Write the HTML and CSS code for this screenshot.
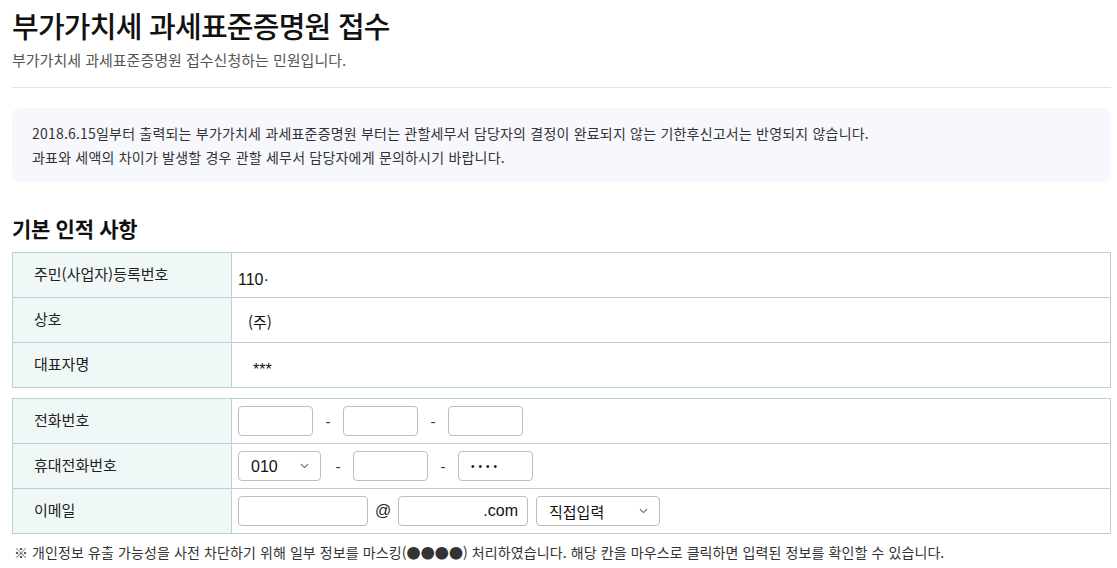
FILE: index.html
```html
<!DOCTYPE html>
<html lang="ko">
<head>
<meta charset="utf-8">
<title>부가가치세 과세표준증명원 접수</title>
<link rel="stylesheet" href="styles.css">
</head>
<body>
<div class="page">
  <header class="head">
    <h1 class="title">부가가치세 과세표준증명원 접수</h1>
    <p class="subtitle">부가가치세 과세표준증명원 접수신청하는 민원입니다.</p>
  </header>
  <hr class="divider">
  <div class="notice">
    <p>2018.6.15일부터 출력되는 부가가치세 과세표준증명원 부터는 관할세무서 담당자의 결정이 완료되지 않는 기한후신고서는 반영되지 않습니다.</p>
    <p>과표와 세액의 차이가 발생할 경우 관할 세무서 담당자에게 문의하시기 바랍니다.</p>
  </div>
  <h2 class="section-title">기본 인적 사항</h2>
  <table class="info">
    <tr>
      <th>주민(사업자)등록번호</th>
      <td><span class="val val-num">110·</span></td>
    </tr>
    <tr>
      <th>상호</th>
      <td><span class="val val-corp">(주)</span></td>
    </tr>
    <tr>
      <th>대표자명</th>
      <td><span class="val val-name">***</span></td>
    </tr>
  </table>
  <table class="info info-form">
    <tr>
      <th>전화번호</th>
      <td>
        <div class="fields">
          <input class="inp inp-s" type="text">
          <span class="sep">-</span>
          <input class="inp inp-s" type="text">
          <span class="sep">-</span>
          <input class="inp inp-s" type="text">
        </div>
      </td>
    </tr>
    <tr>
      <th>휴대전화번호</th>
      <td>
        <div class="fields">
          <span class="sel sel-s">
            <select><option>010</option></select>
            <svg class="chev" width="9" height="6" viewBox="0 0 9 6"><path d="M1 1.2 L4.5 4.6 L8 1.2" fill="none" stroke="#666" stroke-width="1.1"/></svg>
          </span>
          <span class="sep">-</span>
          <input class="inp inp-s" type="text">
          <span class="sep">-</span>
          <input class="inp inp-s inp-pw" type="password" value="1234">
        </div>
      </td>
    </tr>
    <tr>
      <th>이메일</th>
      <td>
        <div class="fields">
          <input class="inp inp-l" type="text">
          <span class="at">@</span>
          <input class="inp inp-l inp-right" type="text" value=".com">
          <span class="sel sel-l">
            <select><option>직접입력</option></select>
            <svg class="chev" width="9" height="6" viewBox="0 0 9 6"><path d="M1 1.2 L4.5 4.6 L8 1.2" fill="none" stroke="#666" stroke-width="1.1"/></svg>
          </span>
        </div>
      </td>
    </tr>
  </table>
  <p class="footnote">※ 개인정보 유출 가능성을 사전 차단하기 위해 일부 정보를 마스킹(●●●●) 처리하였습니다. 해당 칸을 마우스로 클릭하면 입력된 정보를 확인할 수 있습니다.</p>
</div>
</body>
</html>
```
FILE: styles.css
```css
html, body {
  margin: 0;
  padding: 0;
  background: #fff;
}
body {
  font-family: "Noto Sans CJK KR", "Noto Sans", sans-serif;
  color: #222;
}
.page {
  padding: 7px 6px 0 12px;
}
.head { margin: 0; }
.title {
  margin: 0;
  font-size: 29px;
  line-height: 36px;
  font-weight: 500;
  letter-spacing: -0.75px;
  color: #111;
}
.subtitle {
  margin: 7px 0 0;
  font-size: 15px;
  line-height: 20px;
  color: #555;
}
.divider {
  margin: 17px 0 0;
  border: 0;
  border-top: 1px solid #e2e2e2;
  height: 0;
}
.notice {
  margin-top: 20px;
  background: #f7f8fd;
  border-radius: 8px;
  padding: 13px 20px;
}
.notice p {
  margin: 0;
  font-size: 14px;
  line-height: 24px;
  letter-spacing: 0.2px;
  color: #333;
}
.section-title {
  margin: 32px 0 10px;
  font-size: 21px;
  line-height: 28px;
  font-weight: 700;
  letter-spacing: -0.3px;
  color: #111;
}
.info {
  width: 100%;
  border-collapse: collapse;
  border: 1px solid #bccfd5;
}
.info + .info { margin-top: 10px; }
.info th, .info td {
  border: 1px solid #bccfd5;
  height: 45px;
  padding: 0;
  box-sizing: border-box;
}
.info th {
  width: 219px;
  background: #eff7f7;
  text-align: left;
  font-weight: 400;
  font-size: 15px;
  color: #222;
  padding: 0 0 3px 21px;
}
.info td {
  padding-left: 6px;
}
.val {
  font-family: "Liberation Sans", "Noto Sans CJK KR", sans-serif;
  font-size: 16px;
  color: #111;
  position: relative;
  top: 3px;
}
.val-corp { margin-left: 10px; font-family: "Noto Sans CJK KR", sans-serif; font-size: 15px; top: 1px; }
.val-name { margin-left: 15px; }
.fields {
  display: flex;
  align-items: center;
}
.inp {
  box-sizing: border-box;
  height: 30px;
  border: 1px solid #bdbdbd;
  border-radius: 4px;
  padding: 0 12px;
  font-family: "Liberation Sans", "Noto Sans CJK KR", sans-serif;
  font-size: 16px;
  color: #111;
  background: #fff;
  margin: 0;
}
.inp-s { width: 75px; }
.inp-l { width: 130px; }
.inp-right { text-align: right; padding-right: 9px; }
.inp-pw { letter-spacing: 4px; font-size: 10px; padding-left: 12px; }
.sep {
  width: 30px;
  text-align: center;
  font-size: 15px;
  color: #333;
  font-family: "Liberation Sans", sans-serif;
}
.at {
  width: 30px;
  text-align: center;
  font-size: 16px;
  color: #222;
  font-family: "Liberation Sans", sans-serif;
}
.sel {
  position: relative;
  display: inline-block;
  height: 30px;
}
.sel select {
  -webkit-appearance: none;
  appearance: none;
  box-sizing: border-box;
  height: 30px;
  width: 100%;
  border: 1px solid #bdbdbd;
  border-radius: 4px;
  background: #fff;
  padding: 0 12px;
  font-family: "Liberation Sans", "Noto Sans CJK KR", sans-serif;
  font-size: 16px;
  color: #111;
  margin: 0;
}
.sel-s { width: 83px; margin-right: 2px; }
.sel-l { width: 124px; margin-left: 8px; }
.sel-l select { font-family: "Noto Sans CJK KR", sans-serif; font-size: 15px; }
.chev {
  position: absolute;
  right: 12px;
  top: 12px;
  pointer-events: none;
}
.footnote {
  margin: 8px 0 0 2px;
  font-size: 14px;
  line-height: 20px;
  letter-spacing: 0.1px;
  color: #333;
}
```
